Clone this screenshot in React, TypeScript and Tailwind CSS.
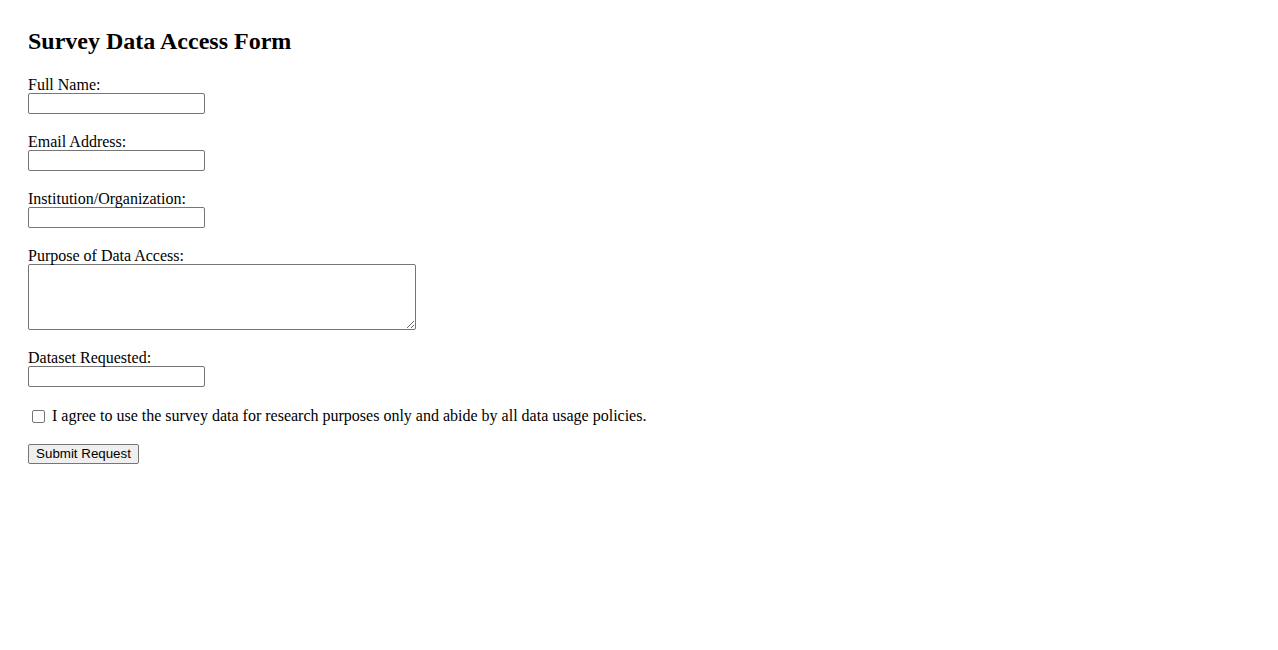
import { useState } from 'react';

const fields = [
  { id: 'name', label: 'Full Name:' },
  { id: 'email', label: 'Email Address:' },
  { id: 'institution', label: 'Institution/Organization:' },
];

export default function App() {
  const [agree, setAgree] = useState(false);

  return (
    <div className="min-h-screen bg-white pt-[27px] pl-[28px] text-black font-['Liberation_Serif',serif] text-[16px]">
      <h2 className="mb-[20px] text-[24px] font-bold leading-[28px]">Survey Data Access Form</h2>
      <form onSubmit={(e) => e.preventDefault()}>
        {fields.map((f) => (
          <div key={f.id} className="mb-[18px]">
            <label htmlFor={f.id} className="block h-[18px] leading-[20px]">{f.label}</label>
            <input
              id={f.id}
              type="text"
              className="block h-[21px] w-[177px] rounded-[2px] border border-[#767676] bg-white px-[2px] text-[13px]"
            />
          </div>
        ))}

        <div className="mb-[18px]">
          <label htmlFor="purpose" className="block h-[18px] leading-[20px]">Purpose of Data Access:</label>
          <textarea
            id="purpose"
            className="block h-[66px] w-[388px] rounded-[2px] border border-[#767676] bg-white px-[2px] text-[13px]"
          />
        </div>

        <div className="mb-[20px]">
          <label htmlFor="dataset" className="block h-[18px] leading-[20px]">Dataset Requested:</label>
          <input
            id="dataset"
            type="text"
            className="block h-[21px] w-[177px] rounded-[2px] border border-[#767676] bg-white px-[2px] text-[13px]"
          />
        </div>

        <div className="mb-[16px] flex h-[18px] items-center leading-[18px]">
          <input
            id="agree"
            type="checkbox"
            checked={agree}
            onChange={(e) => setAgree(e.target.checked)}
            className="ml-[4px] mr-[7px] h-[13px] w-[13px] appearance-none rounded-[2px] border border-[#767676] bg-white"
          />
          <label htmlFor="agree">I agree to use the survey data for research purposes only and abide by all data usage policies.</label>
        </div>

        <button
          type="submit"
          className="h-[20px] w-[111px] rounded-[2px] border border-[#767676] bg-[#efefef] px-[6px] font-['Liberation_Sans',sans-serif] text-[13.33px] leading-[16px]"
        >
          Submit Request
        </button>
      </form>
    </div>
  );
}
